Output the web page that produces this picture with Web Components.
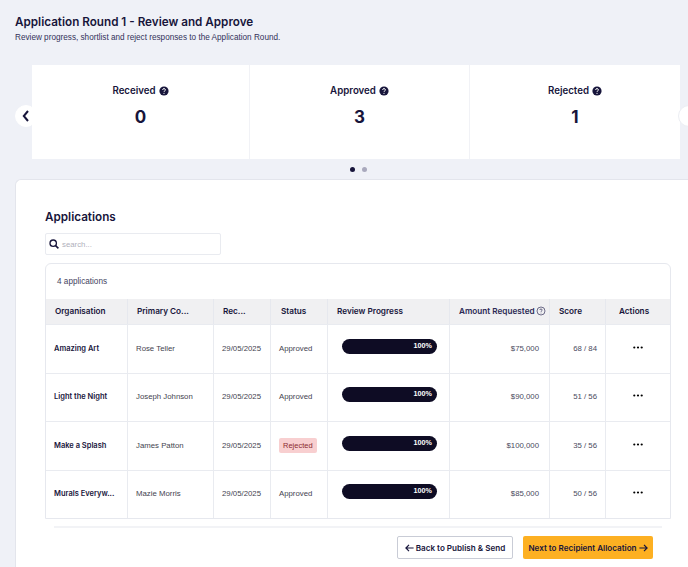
<!DOCTYPE html>
<html lang="en">
<head>
<meta charset="utf-8">
<title>Review and Approve</title>
<style>
  html, body { margin: 0; height: 567px; overflow: hidden; }
  body { background: #eff1f7; font-family: Inter, "Liberation Sans", sans-serif; color: #17153b; }
</style>
</head>
<body>
<review-page>
  <page-title heading="Application Round 1 - Review and Approve">Review progress, shortlist and reject responses to the Application Round.</page-title>
  <stat-carousel>
    <stat-card label="Received" value="0" width="217"></stat-card>
    <stat-card label="Approved" value="3" width="219"></stat-card>
    <stat-card label="Rejected" value="1" width="210"></stat-card>
  </stat-carousel>
  <applications-panel></applications-panel>
</review-page>

<script>
// Help icon used next to the stat labels
const helpIcon = `<svg width="10" height="10" viewBox="0 0 10 10" aria-hidden="true">
  <circle cx="5" cy="5" r="4.6" fill="#17153b"/>
  <path d="M3.6 3.9c0-.8.6-1.3 1.4-1.3s1.4.5 1.4 1.2c0 .6-.3.9-.8 1.2-.4.2-.6.4-.6.9" fill="none" stroke="#fff" stroke-width="1"/>
  <circle cx="5" cy="7.3" r=".6" fill="#fff"/>
</svg>`;

class ReviewPage extends HTMLElement {
  constructor() {
    super();
    this.attachShadow({ mode: 'open' });
    this.shadowRoot.innerHTML = `
      <style>
        :host { display: block; width: 688px; height: 567px; overflow: hidden; }
      </style>
      <slot></slot>`;
  }
}

class PageTitle extends HTMLElement {
  constructor() {
    super();
    this.attachShadow({ mode: 'open' });
    this.shadowRoot.innerHTML = `
      <style>
        :host { display: block; padding: 14px 15px 0; height: 51px; }
        h1 { margin: 0; font-size: 11.7px; line-height: 16px; font-weight: 600; color: #17153b; }
        p { margin: 2px 0 0; font-size: 8.2px; line-height: 12px; color: #33325a; font-family: "Liberation Sans", sans-serif; }
      </style>
      <h1>${this.getAttribute('heading')}</h1>
      <p><slot></slot></p>`;
  }
}

class StatCarousel extends HTMLElement {
  constructor() {
    super();
    this.attachShadow({ mode: 'open' });
    this.shadowRoot.innerHTML = `
      <style>
        :host { display: block; position: relative; height: 114px; }
        .track { display: flex; gap: 1px; margin-left: 32px; width: 648px; height: 94px; background: #f1f2f6; }
        .dots { display: flex; justify-content: center; gap: 7px; margin: 8px 0 0 28px; }
        .dots i { width: 5px; height: 5px; border-radius: 50%; background: #a9a9bd; }
        .dots i:first-child { background: #17153b; }
        button {
          position: absolute; top: 40px; width: 22px; height: 22px; padding: 0; border: 1px solid #eceef3; border-radius: 50%;
          background: #fff; display: flex; align-items: center; justify-content: center;
        }
        .prev { left: 15px; border-color: #fff; }
        .next { left: 678px; }
        .next svg { margin-left: 3px; flex: none; }
      </style>
      <div class="track"><slot></slot></div>
      <div class="dots"><i></i><i></i></div>
      <button class="prev" aria-label="Previous"><svg width="8" height="12" viewBox="0 0 8 12"><path d="M6 1 1.800 6 6 11" fill="none" stroke="#17153b" stroke-width="2"/></svg></button>
      <button class="next" aria-label="Next"><svg width="8" height="12" viewBox="0 0 8 12"><path d="M2 1l4.200 5L2 11" fill="none" stroke="#17153b" stroke-width="2"/></svg></button>`;
  }
}

class StatCard extends HTMLElement {
  constructor() {
    super();
    this.attachShadow({ mode: 'open' });
    this.shadowRoot.innerHTML = `
      <style>
        :host { display: flex; flex: 0 0 ${this.getAttribute('width')}px; flex-direction: column; align-items: center; background: #fff; padding-top: 19px; box-sizing: border-box; }
        .label { display: flex; align-items: center; gap: 3px; font-size: 9.7px; line-height: 14px; font-weight: 600; color: #17153b; }
        .value { margin-top: 7px; font-size: 17px; line-height: 24px; font-weight: 700; color: #17153b; }
      </style>
      <div class="label">${this.getAttribute('label')} ${helpIcon}</div>
      <div class="value">${this.getAttribute('value')}</div>`;
  }
}

class ApplicationsPanel extends HTMLElement {
  constructor() {
    super();
    this.attachShadow({ mode: 'open' });
    this.shadowRoot.innerHTML = `
      <style>
        :host {
          display: block; box-sizing: border-box; margin-left: 15px; width: 673px; height: 388px; padding: 29px 0 0 29px;
          background: #fff; border: 1px solid #e3e5ec; border-right: 0; border-bottom: 0; border-radius: 6px 0 0 0;
        }
        h2 { margin: 0; font-size: 11.7px; line-height: 16px; font-weight: 600; color: #17153b; }
        .search {
          display: flex; align-items: center; gap: 3px; box-sizing: border-box; width: 176px; height: 22px; margin-top: 8px; padding-left: 3px;
          border: 1px solid #e9ebf0; border-radius: 2px;
        }
        .search span { font-size: 7.8px; color: #b0b0bb; font-family: "Liberation Sans", sans-serif; }
        .sep { height: 2px; margin: 7px 0 0 9px; width: 608px; background: #f2f3f6; }
        .actions { display: flex; justify-content: flex-end; gap: 10px; width: 608px; margin: 8px 0 0 0; }
      </style>
      <h2>Applications</h2>
      <div class="search">
        <svg width="10" height="10" viewBox="0 0 10 10"><circle cx="4.2" cy="4.2" r="3.2" fill="none" stroke="#17153b" stroke-width="1.3"/><path d="M6.600 6.600 9.400 9.400" stroke="#17153b" stroke-width="1.500"/></svg>
        <span>search...</span>
      </div>
      <applications-table></applications-table>
      <div class="sep"></div>
      <div class="actions">
        <nav-button kind="back">Back to Publish &amp; Send</nav-button>
        <nav-button kind="next">Next to Recipient Allocation</nav-button>
      </div>`;
  }
}

const applications = [
  ['Amazing Art', 'Rose Teller', '29/05/2025', 'Approved', '$75,000', '68 / 84'],
  ['Light the Night', 'Joseph Johnson', '29/05/2025', 'Approved', '$90,000', '51 / 56'],
  ['Make a Splash', 'James Patton', '29/05/2025', 'Rejected', '$100,000', '35 / 56'],
  ['Murals Everyw...', 'Mazie Morris', '29/05/2025', 'Approved', '$85,000', '50 / 56'],
];

class ApplicationsTable extends HTMLElement {
  constructor() {
    super();
    this.attachShadow({ mode: 'open' });
    const head = ['Organisation', 'Primary Co...', 'Rec...', 'Status', 'Review Progress', '', 'Score', 'Actions'];
    const headCells = head.map((h, i) => i === 5
      ? `<div class="th amount">Amount Requested<svg width="10" height="10" viewBox="0 0 10 10"><circle cx="5" cy="5" r="4" fill="none" stroke="#33325a" stroke-width=".7"/><path d="M3.800 4c0-.7.5-1 1.200-1s1.200.4 1.200 1c0 .5-.3.7-.7 1-.3.2-.5.4-.5.8" fill="none" stroke="#33325a" stroke-width=".7"/><circle cx="5" cy="7" r=".4" fill="#33325a"/></svg></div>`
      : `<div class="th${i === 7 ? ' last' : ''}${i === 3 ? ' st' : ''}">${h}</div>`).join('');
    const rows = applications.map(a => `
      <div class="td org">${a[0]}</div>
      <div class="td">${a[1]}</div>
      <div class="td">${a[2]}</div>
      <div class="td status">${a[3] === 'Rejected' ? '<span class="rej">Rejected</span>' : a[3]}</div>
      <div class="td prog"><div class="bar">100%</div></div>
      <div class="td amt">${a[4]}</div>
      <div class="td score">${a[5]}</div>
      <div class="td more"><svg width="10" height="3" viewBox="0 0 10 3"><circle cx="1.3" cy="1.500" r="1.1"/><circle cx="5" cy="1.500" r="1.1"/><circle cx="8.700" cy="1.500" r="1.1"/></svg></div>`).join('');
    this.shadowRoot.innerHTML = `
      <style>
        :host {
          display: block; box-sizing: border-box; width: 626px; height: 256px; margin-top: 8px;
          border: 1px solid #e6e8ee; border-radius: 6px 6px 0 0; overflow: hidden; background: #fff;
        }
        .count { height: 35px; padding-left: 11px; display: flex; align-items: center; font-size: 8.2px; color: #44445f; font-family: "Liberation Sans", sans-serif; }
        .grid { display: grid; grid-template-columns: 82px 86px 57px 57px 122px 100px 56px 64px; grid-template-rows: 25px 49px 48px 49px 48px; }
        .th {
          display: flex; align-items: center; padding: 0 0 1px 9px; background: #f0f0f2; border-right: 1px solid #e6e8ee;
          font-size: 8.2px; font-weight: 600; color: #17153b; white-space: nowrap; box-sizing: border-box;
        }
        .th.st { padding-left: 10px; }
        .th.amount { padding-left: 9px; gap: 1px; color: #2b2a55; }
        .th.last { padding-left: 13px; border-right: 0; }
        .td {
          display: flex; align-items: center; padding: 0 0 2px 8px; box-sizing: border-box; border-right: 1px solid #e9ebf0; border-top: 1px solid #e9ebf0;
          font-size: 7.8px; color: #44444f; white-space: nowrap; font-family: "Liberation Sans", sans-serif;
        }
        .org { font-family: Inter, sans-serif; font-weight: 600; color: #17153b; font-size: 7.5px; }
        .rej { background: #f8cfd0; color: #8c2a30; padding: 3px 4px; border-radius: 2px; font-size: 7.5px; }
        .prog { padding-left: 14px; }
        .bar {
          width: 95px; height: 15px; box-sizing: border-box; border-radius: 8px; background: #0e0c24; color: #fff; margin-top: -4px;
          font-size: 7.2px; font-weight: 700; line-height: 14px; text-align: right; padding-right: 5px;
        }
        .amt, .score { justify-content: flex-end; padding: 0 10px 2px 0; color: #4a4a60; }
        .score { padding-right: 8px; }
        .more { justify-content: center; padding: 0 0 4px; border-right: 0; }
      </style>
      <div class="count">4 applications</div>
      <div class="grid">${headCells}${rows}</div>`;
  }
}

class NavButton extends HTMLElement {
  constructor() {
    super();
    this.attachShadow({ mode: 'open' });
    const back = this.getAttribute('kind') === 'back';
    const arrow = back
      ? '<svg width="9" height="8" viewBox="0 0 9 8"><path d="M4 .8.9 4 4 7.2M1 4h7.600" fill="none" stroke="#17153b" stroke-width="1.2"/></svg>'
      : '<svg width="9" height="8" viewBox="0 0 9 8"><path d="M5 .8 8.100 4 5 7.200M8 4H.4" fill="none" stroke="#17153b" stroke-width="1.2"/></svg>';
    this.shadowRoot.innerHTML = `
      <style>
        :host {
          display: flex; align-items: center; justify-content: center; gap: 2px; box-sizing: border-box; height: 23px; border-radius: 2px;
          font-size: 8.1px; font-weight: 600; color: #17153b; white-space: nowrap;
          ${back ? 'width: 116px; background: #fff; border: 1px solid #c9ccd6;' : 'width: 130px; background: #fdb022;'}
        }
      </style>
      ${back ? arrow : ''}<slot></slot>${back ? '' : arrow}`;
  }
}

customElements.define('review-page', ReviewPage);
customElements.define('page-title', PageTitle);
customElements.define('stat-carousel', StatCarousel);
customElements.define('stat-card', StatCard);
customElements.define('applications-panel', ApplicationsPanel);
customElements.define('applications-table', ApplicationsTable);
customElements.define('nav-button', NavButton);
</script>
</body>
</html>
